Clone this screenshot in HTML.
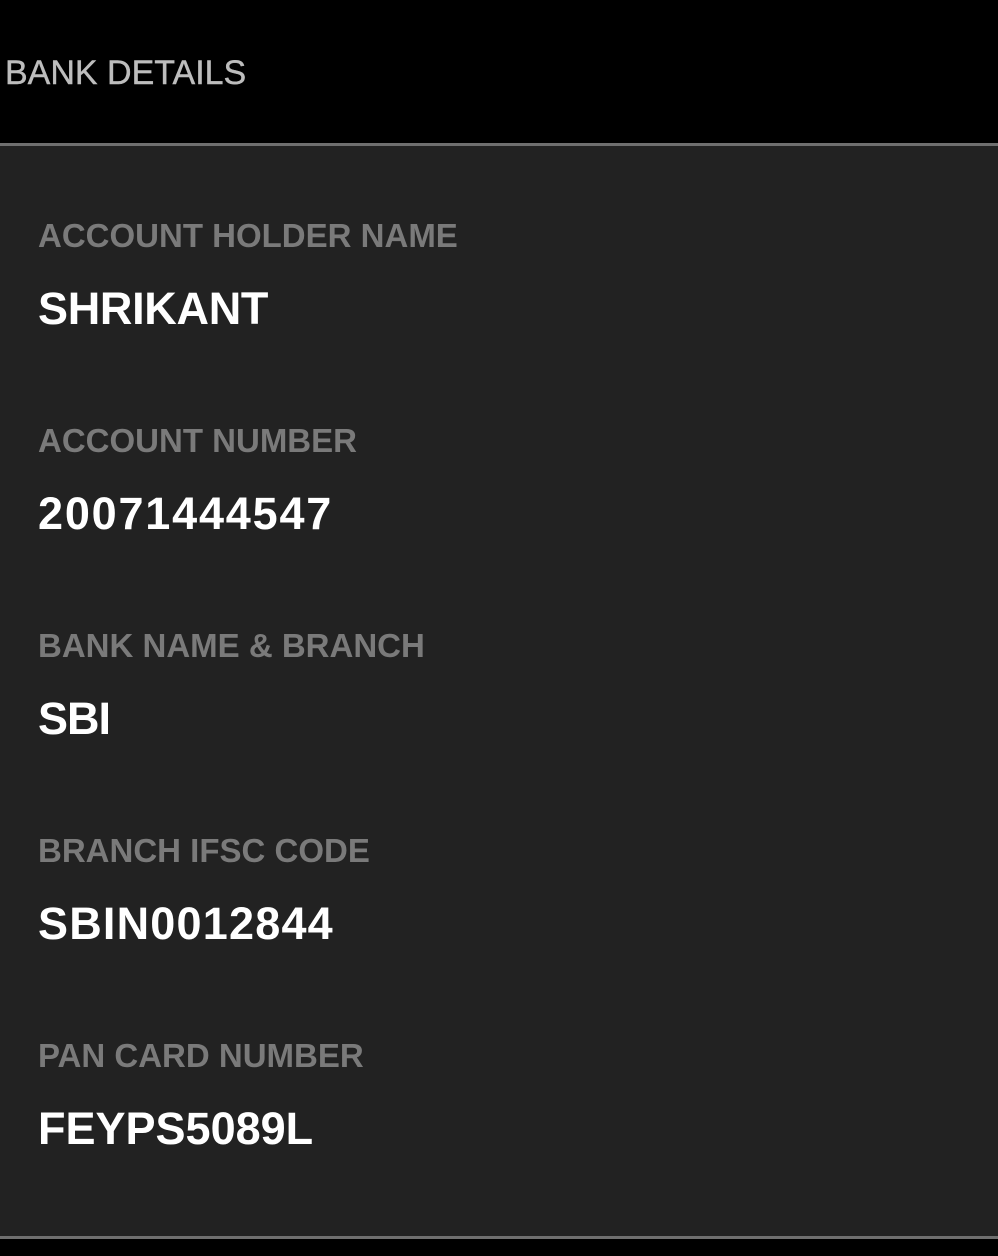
<!DOCTYPE html>
<html><head><style>
body{margin:0;width:998px;height:1256px;background:#000;position:relative;overflow:hidden;font-family:"Liberation Sans",Arial,sans-serif}
.h{position:absolute;left:5px;top:56px;font-size:34px;line-height:34px;color:#bdbdbd;white-space:nowrap;-webkit-text-stroke:0.4px #bdbdbd}
.panel{position:absolute;left:0;top:143px;width:998px;height:1096px;background:#222;border-top:3px solid #6f6f6f;border-bottom:3px solid #6f6f6f;box-sizing:border-box}
.l{position:absolute;left:38px;font-size:33px;line-height:34px;color:#7a7a7a;font-weight:bold;white-space:nowrap}
.v{position:absolute;left:38px;font-size:45px;line-height:46px;color:#fff;font-weight:bold;white-space:nowrap}
</style></head><body>
<div class="h">BANK DETAILS</div>
<div class="panel"></div>
<div class="l" style="top:219px">ACCOUNT HOLDER NAME</div>
<div class="v" style="top:286px;letter-spacing:-0.3px">SHRIKANT</div>
<div class="l" style="top:424px">ACCOUNT NUMBER</div>
<div class="v" style="top:491px;letter-spacing:1.8px">20071444547</div>
<div class="l" style="top:629px">BANK NAME &amp; BRANCH</div>
<div class="v" style="top:696px;letter-spacing:-1px">SBI</div>
<div class="l" style="top:834px">BRANCH IFSC CODE</div>
<div class="v" style="top:901px;letter-spacing:1.2px">SBIN0012844</div>
<div class="l" style="top:1039px">PAN CARD NUMBER</div>
<div class="v" style="top:1106px">FEYPS5089L</div>
</body></html>
